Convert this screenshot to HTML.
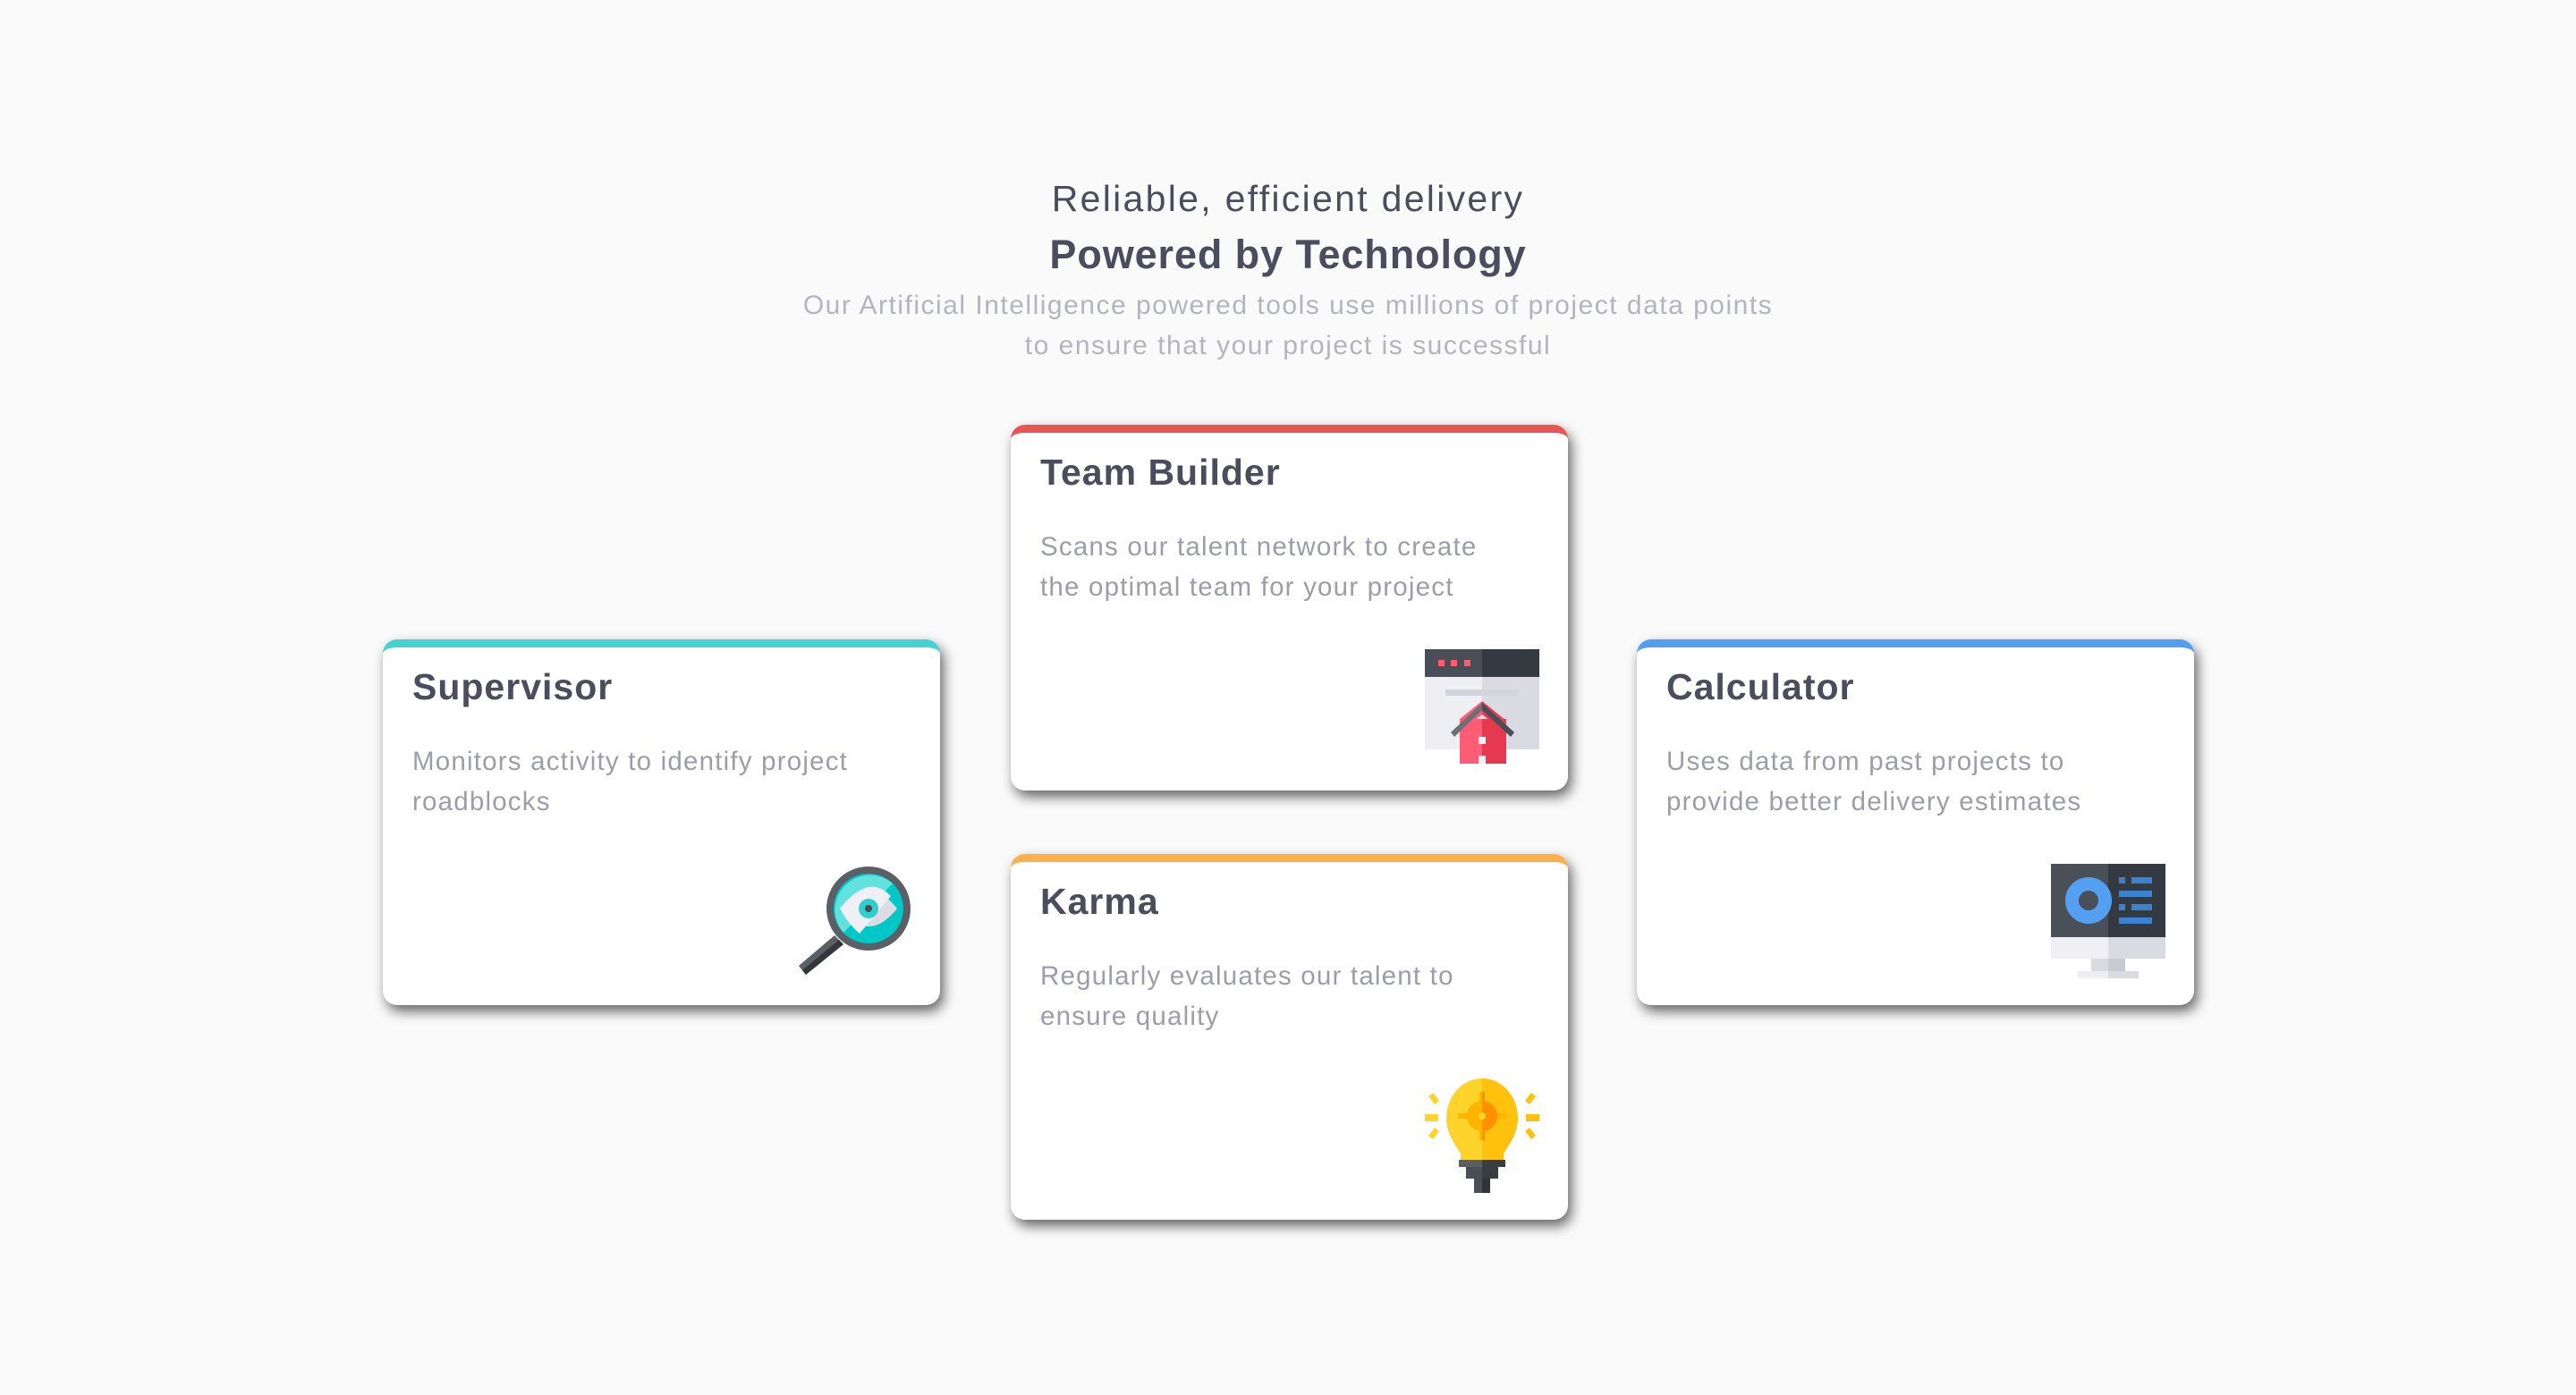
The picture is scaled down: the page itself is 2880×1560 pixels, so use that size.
<!DOCTYPE html>
<html><head><meta charset="utf-8"><style>
html,body{margin:0;padding:0}
body{width:2880px;height:1560px;background:#fafafa;position:relative;overflow:hidden;font-family:"Liberation Sans",sans-serif}
.h{position:absolute;left:0;width:2880px;text-align:center;white-space:nowrap}
.card{position:absolute;width:623px;height:409px;background:#fff;border-radius:16px;box-sizing:border-box;border-top:9px solid;box-shadow:4px 7px 14px rgba(0,0,0,0.6)}
.card .t{position:absolute;left:33px;top:20px;font-size:41px;font-weight:bold;color:#4b4d5f;line-height:49px;white-space:nowrap;letter-spacing:1px}
.card .d{position:absolute;left:33px;top:105px;width:580px;font-size:29.5px;line-height:45px;color:#9c9cab;white-space:nowrap;letter-spacing:1.2px}
.card svg{position:absolute;right:32px;bottom:30px}
</style></head><body>
<div class="h" style="top:198px;font-size:41px;line-height:48px;color:#4b4d5f;letter-spacing:2.3px">Reliable, efficient delivery</div>
<div class="h" style="top:259px;font-size:45px;line-height:52px;font-weight:bold;color:#4b4d5f;letter-spacing:0.9px">Powered by Technology</div>
<div class="h" style="top:319px;font-size:30px;line-height:45px;color:#b4b4bf;letter-spacing:1.5px">Our Artificial Intelligence powered tools use millions of project data points<br>to ensure that your project is successful</div>

<div class="card" style="left:428px;top:715px;border-color:#44d3d2">
<div class="t">Supervisor</div>
<div class="d">Monitors activity to identify project<br>roadblocks</div>
<svg width="128" height="128" viewBox="0 0 128 128">
<path d="M52 90 L10 124 L2 114 L42 80 Z" fill="#5a6066"/>
<path d="M52 90 L10 124 L6 119 L47 85 Z" fill="#34383b"/>
<circle cx="80" cy="50" r="47" fill="#5a6066"/>
<circle cx="80" cy="50" r="39" fill="#00c8c8"/>
<path d="M52 77 A39 39 0 0 1 107 22 Z" fill="#62e2df"/>
<path d="M48 50 Q80 10 112 50 Q80 90 48 50 Z" fill="#dcdce5"/>
<path d="M48 50 Q80 10 105 36 L70 78 Q58 68 48 50 Z" fill="#efeff4"/>
<circle cx="80" cy="50" r="11" fill="#2fcfcf"/>
<circle cx="80" cy="50" r="4" fill="#464b52"/>
</svg>
</div>

<div class="card" style="left:1130px;top:475px;border-color:#ea5454">
<div class="t">Team Builder</div>
<div class="d">Scans our talent network to create<br>the optimal team for your project</div>
<svg width="128" height="128" viewBox="0 0 128 128">
<rect x="0" y="0" width="64" height="31" fill="#4a4f57"/>
<rect x="64" y="0" width="64" height="31" fill="#343a42"/>
<rect x="15" y="12" width="7" height="7" fill="#fd5c77"/>
<rect x="29" y="12" width="7" height="7" fill="#fd5c77"/>
<rect x="44" y="12" width="7" height="7" fill="#fd5c77"/>
<rect x="0" y="31" width="64" height="81" fill="#eeeef3"/>
<rect x="64" y="31" width="64" height="81" fill="#dadae3"/>
<rect x="23" y="45" width="82" height="7" fill="#d3d3dd"/>
<rect x="39" y="78" width="25" height="50" fill="#fd5c77"/>
<rect x="64" y="78" width="27" height="50" fill="#e63950"/>
<path d="M39 78 L64 58 L64 73 L39 93 Z" fill="#fd5c77"/>
<path d="M64 58 L91 80 L91 93 L64 73 Z" fill="#e63950"/>
<path d="M29 93 L64 60 L64 68 L33 98 Z" fill="#6b7175"/>
<path d="M64 60 L100 93 L96 98 L64 68 Z" fill="#4a4f57"/>
<rect x="60" y="98" width="8" height="8" fill="#eeeef3"/>
<rect x="60" y="119" width="8" height="9" fill="#eeeef3"/>
</svg>
</div>

<div class="card" style="left:1130px;top:955px;border-color:#fcaf4a">
<div class="t">Karma</div>
<div class="d">Regularly evaluates our talent to<br>ensure quality</div>
<svg width="128" height="128" viewBox="0 0 128 128">
<path d="M64 0 C40 0 24 22 24 44 C24 62 34 74 40 84 L40 91 L64 91 Z" fill="#fed42b"/>
<path d="M64 0 C88 0 104 22 104 44 C104 62 94 74 88 84 L88 91 L64 91 Z" fill="#fec20c"/>
<circle cx="64" cy="42" r="17" fill="#fdb500"/>
<rect x="61" y="15" width="6" height="54" fill="#fdb500"/>
<rect x="37" y="39" width="54" height="6" fill="#fdb500"/>
<path d="M64 25 A17 17 0 0 1 64 59 Z" fill="#ff9100"/>
<rect x="64" y="15" width="3" height="54" fill="#ff9100"/>
<circle cx="64" cy="42" r="4" fill="#fed42b"/>
<rect x="38" y="91" width="26" height="8" fill="#5a5f66"/><rect x="64" y="91" width="26" height="8" fill="#393d41"/>
<rect x="46" y="99" width="18" height="13" fill="#4a4f55"/><rect x="64" y="99" width="18" height="13" fill="#393d41"/>
<rect x="55" y="112" width="9" height="16" fill="#4a4f55"/><rect x="64" y="112" width="9" height="16" fill="#2f3337"/>
<rect x="0" y="40" width="15" height="8" fill="#fed42b"/><rect x="113" y="40" width="15" height="8" fill="#fec20c"/>
<path d="M4 20 L9 16 L16 25 L11 29 Z" fill="#fed42b"/><path d="M124 20 L119 16 L112 25 L117 29 Z" fill="#fec20c"/>
<path d="M4 64 L9 68 L16 59 L11 55 Z" fill="#fed42b"/><path d="M124 64 L119 68 L112 59 L117 55 Z" fill="#fec20c"/>
</svg>
</div>

<div class="card" style="left:1830px;top:715px;border-color:#549ef2">
<div class="t">Calculator</div>
<div class="d">Uses data from past projects to<br>provide better delivery estimates</div>
<svg width="128" height="128" viewBox="0 0 128 128">
<rect x="0" y="0" width="64" height="82" fill="#4a5058"/>
<rect x="64" y="0" width="64" height="82" fill="#343a41"/>
<circle cx="42" cy="41" r="18.5" fill="none" stroke="#559ff3" stroke-width="15"/>
<g fill="#3b82d3">
<rect x="76" y="15" width="7" height="7"/><rect x="90" y="15" width="23" height="7"/>
<rect x="76" y="30" width="37" height="7"/>
<rect x="76" y="45" width="7" height="7"/><rect x="90" y="45" width="23" height="7"/>
<rect x="76" y="60" width="37" height="7"/></g>
<rect x="0" y="82" width="64" height="24" fill="#efeff4"/><rect x="64" y="82" width="64" height="24" fill="#dadae3"/>
<rect x="45" y="106" width="19" height="14" fill="#dadae3"/><rect x="64" y="106" width="19" height="14" fill="#cacad3"/>
<rect x="30" y="120" width="34" height="8" fill="#ededf2"/><rect x="64" y="120" width="34" height="8" fill="#dadae3"/>
</svg>
</div>
</body></html>
